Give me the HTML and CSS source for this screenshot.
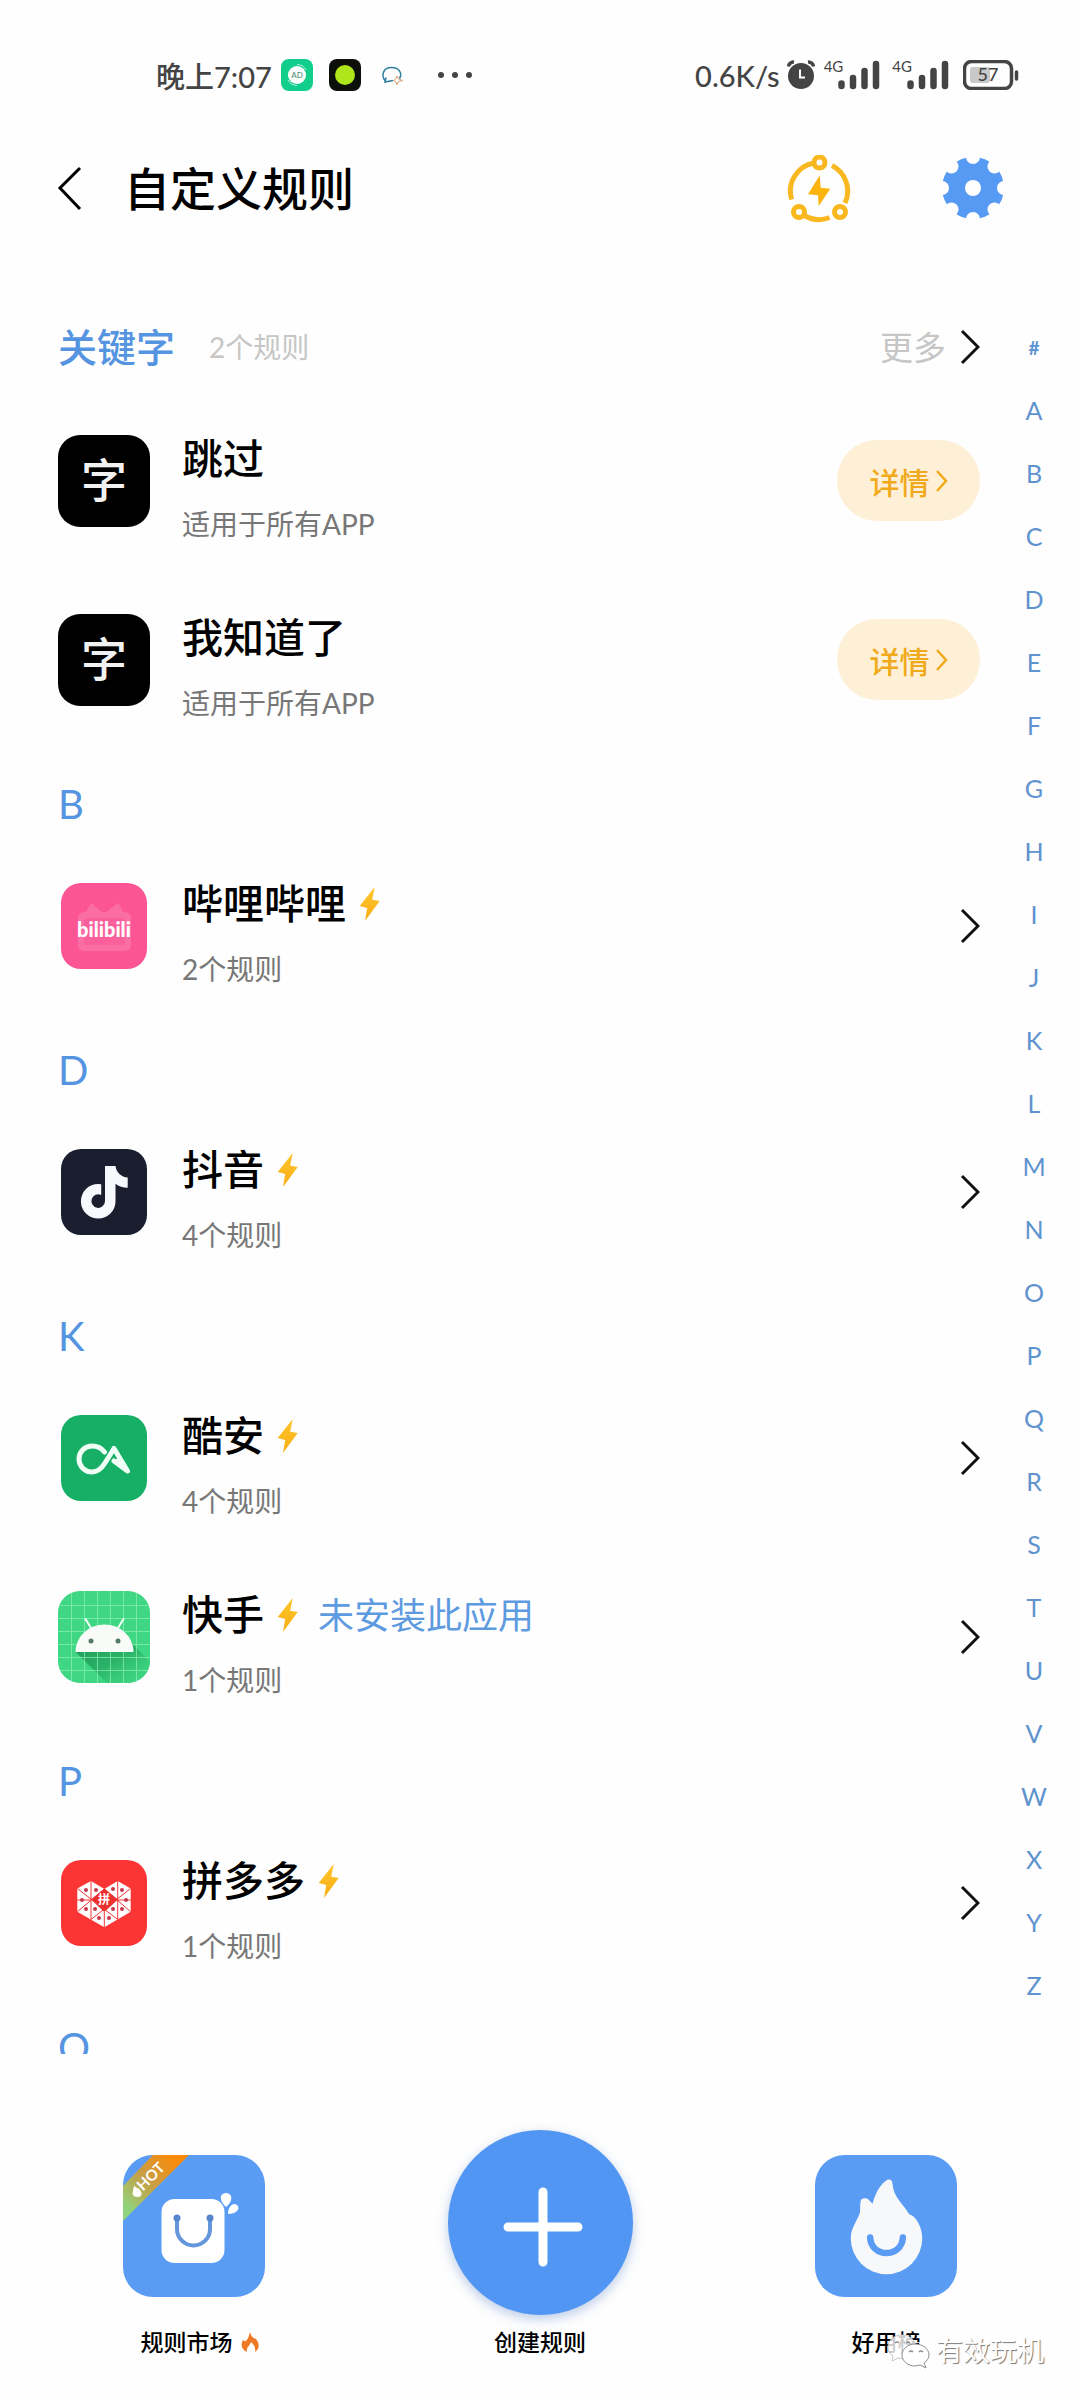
FILE: index.html
```html
<!DOCTYPE html>
<html lang="zh-CN">
<head>
    <meta charset="UTF-8">
    <meta name="viewport" content="width=device-width, initial-scale=1.0">
    <title>自定义规则</title>
    <link rel="stylesheet" href="styles.css">
</head>
<body>
    <!-- Shared icons -->
    <svg class="sprite" aria-hidden="true">
        <defs>
            <linearGradient id="bolt-fill" x1="0" y1="0" x2="0" y2="1">
                <stop offset="0" stop-color="#ffc62e"/>
                <stop offset="1" stop-color="#f8ad12"/>
            </linearGradient>
        </defs>
        <symbol id="bolt" viewBox="0 0 21 34">
            <path d="M15.7 0L.7 19l7.5 2L6 34l14.7-20-7.5-1.2z" fill="url(#bolt-fill)"/>
        </symbol>
        <symbol id="chevron" viewBox="0 0 20 36">
            <path d="M2 2l16 16L2 34" fill="none" stroke="currentColor" stroke-width="3"/>
        </symbol>
        <symbol id="signal" viewBox="0 0 42 30">
            <path d="M3.5 23.500v2.500M15 18v8M26.500 11v15M38 4v22" stroke="currentColor" stroke-width="6.500" stroke-linecap="round"/>
        </symbol>
    </svg>

    <div class="status-bar">
        <div class="status-left">
            <span class="status-time">晚上7:07</span>
            <svg class="status-app" viewBox="0 0 32 32">
                <rect width="32" height="32" rx="8" fill="#12ce8c"/>
                <circle cx="16" cy="16" r="9" fill="#fff"/>
                <path d="M16 5.500a10.500 10.500 0 0 1 9 5.500M16 26.500a10.500 10.500 0 0 1-9-5.500" fill="none" stroke="#baf3df" stroke-width="1"/>
                <text class="ad-text" x="16" y="19" text-anchor="middle">AD</text>
            </svg>
            <svg class="status-app" viewBox="0 0 32 32">
                <rect width="32" height="32" rx="8" fill="#0c0f0a"/>
                <circle cx="16" cy="16" r="10" fill="#aee51b"/>
            </svg>
            <svg class="status-app" viewBox="0 0 32 32">
                <path d="M8 21.500C4 16.500 6 8.500 14.500 8.500c8 0 11 6 8 11M9 18.500l-1 4.500 8-1.500" fill="none" stroke="#2d7f9b" stroke-width="1.500"/>
                <path d="M20 17l1.500 3 4 1.500-4 1-1.500 3-1.500-3-2-1 2-1.500z" fill="#fff" stroke="#d79a6a" stroke-width="1"/>
            </svg>
            <svg class="status-dots" viewBox="0 0 36 8">
                <circle cx="4" cy="4" r="3" fill="currentColor"/>
                <circle cx="18" cy="4" r="3" fill="currentColor"/>
                <circle cx="32" cy="4" r="3" fill="currentColor"/>
            </svg>
        </div>
        <div class="status-right">
            <span class="status-speed">0.6K/s</span>
            <svg class="status-alarm" viewBox="0 0 28 30">
                <path d="M1.500 6.500A5 5 0 0 1 7 2M26.500 6.500A5 5 0 0 0 21 2" fill="none" stroke="currentColor" stroke-width="3.500"/>
                <circle cx="14" cy="16" r="13" fill="currentColor"/>
                <path d="M13 9.500v8h5" fill="none" stroke="#fff" stroke-width="2"/>
            </svg>
            <span class="network">4G</span>
            <svg class="status-signal"><use href="#signal"/></svg>
            <span class="network network-second">4G</span>
            <svg class="status-signal"><use href="#signal"/></svg>
            <svg class="status-battery" viewBox="0 0 56 30">
                <rect x="1.500" y="1.500" width="47" height="27" rx="7" fill="none" stroke="currentColor" stroke-width="3.500"/>
                <rect x="7" y="7" width="20" height="16" rx="3" fill="#c9c9c9"/>
                <path d="M53.500 12v7" stroke="currentColor" stroke-width="3.500" stroke-linecap="round"/>
                <text class="battery-text" x="25" y="21" text-anchor="middle">57</text>
            </svg>
        </div>
    </div>

    <header class="page-header">
        <a class="back" href="#" aria-label="返回">
            <svg viewBox="0 0 26 46"><path d="M24 2L4 22l20 21" fill="none" stroke="currentColor" stroke-width="3"/></svg>
        </a>
        <h1>自定义规则</h1>
        <button class="header-btn" type="button" aria-label="自动规则">
            <svg viewBox="0 0 68 68" fill="none" stroke="#f9b81f" stroke-width="5">
                <path d="M6.700 44.500A28.500 28.500 0 0 1 29 8M47 10.600A28.500 28.500 0 0 1 60 48M44.500 62.500A28.500 28.500 0 0 1 19.500 60.500"/>
                <circle cx="34.500" cy="7.500" r="5.500"/>
                <circle cx="14" cy="57" r="5.500"/>
                <circle cx="55" cy="57" r="5.500"/>
                <path d="M34.700 20.300L23 39.300l10 1 .7 10.700 11.600-17.300-9.600-1z" fill="#fdb40d" stroke="none"/>
            </svg>
        </button>
        <button class="header-btn" type="button" aria-label="设置">
            <svg viewBox="0 0 68 68">
                <mask id="gear-mask">
                    <rect width="68" height="68" fill="#fff"/>
                    <circle cx="34" cy="33" r="8"/>
                    <circle cx="34" cy="2" r="7"/>
                    <circle cx="34" cy="64" r="7"/>
                    <circle cx="3" cy="33" r="7"/>
                    <circle cx="65" cy="33" r="7"/>
                    <circle cx="12.500" cy="11.500" r="7"/>
                    <circle cx="55.500" cy="11.500" r="7"/>
                    <circle cx="12.500" cy="54.500" r="7"/>
                    <circle cx="55.500" cy="54.500" r="7"/>
                </mask>
                <circle cx="34" cy="33" r="31" fill="#569af3" mask="url(#gear-mask)"/>
            </svg>
        </button>
    </header>

    <main>
        <div class="rules">
            <section>
                <div class="keyword-head">
                    <h2>关键字</h2>
                    <span class="keyword-count">2个规则</span>
                    <a class="more" href="#">更多 <svg class="chevron"><use href="#chevron"/></svg></a>
                </div>
                <div class="rule">
                    <span class="app-icon word-icon">字</span>
                    <div class="rule-text">
                        <h3>跳过</h3>
                        <p>适用于所有APP</p>
                    </div>
                    <button class="detail" type="button">详情<svg viewBox="0 0 12 22"><path d="M1 1l9 10-9 10" fill="none" stroke="currentColor" stroke-width="2.500"/></svg></button>
                </div>
                <div class="rule">
                    <span class="app-icon word-icon">字</span>
                    <div class="rule-text">
                        <h3>我知道了</h3>
                        <p>适用于所有APP</p>
                    </div>
                    <button class="detail" type="button">详情<svg viewBox="0 0 12 22"><path d="M1 1l9 10-9 10" fill="none" stroke="currentColor" stroke-width="2.500"/></svg></button>
                </div>
            </section>

            <section>
                <h2 class="letter" id="B">B</h2>
                <a class="rule" href="#">
                    <svg class="app-icon small" viewBox="0 0 86 86">
                        <rect width="86" height="86" rx="20" fill="#fb5596"/>
                        <g fill="#fff" opacity=".15">
                            <rect x="17" y="29" width="53" height="39" rx="6"/>
                            <path d="M42 30L30 20l-5 9zM44 30l13-10 5 9z"/>
                        </g>
                        <rect x="23" y="35" width="41" height="27" rx="3" fill="#fb5596" opacity=".6"/>
                        <text class="bili-text" x="43" y="54" text-anchor="middle">bilibili</text>
                    </svg>
                    <div class="rule-text">
                        <h3>哔哩哔哩<svg class="bolt"><use href="#bolt"/></svg></h3>
                        <p>2个规则</p>
                    </div>
                    <svg class="chevron"><use href="#chevron"/></svg>
                </a>
            </section>

            <section>
                <h2 class="letter" id="D">D</h2>
                <a class="rule" href="#">
                    <svg class="app-icon small" viewBox="0 0 86 86">
                        <rect width="86" height="86" rx="20" fill="#1b1e2f"/>
                        <path d="M44 17h10.500c.8 6.500 5.500 11 12.200 11.500v10.300c-4.700 0-9-1.500-12.200-4v17.500a17.300 17.300 0 1 1-17.300-17.300l3 .2V46a6.800 6.800 0 1 0 3.800 6.300z" fill="#f7f9ff"/>
                    </svg>
                    <div class="rule-text">
                        <h3>抖音<svg class="bolt"><use href="#bolt"/></svg></h3>
                        <p>4个规则</p>
                    </div>
                    <svg class="chevron"><use href="#chevron"/></svg>
                </a>
            </section>

            <section>
                <h2 class="letter" id="K">K</h2>
                <a class="rule" href="#">
                    <svg class="app-icon small" viewBox="0 0 86 86">
                        <rect width="86" height="86" rx="20" fill="#17ae66"/>
                        <path d="M43.500 37C40.500 33 36 31 31 31a13 13 0 0 0 0 26c6 0 9.500-3.500 13-9l9-14.500L66.500 56 53 46" fill="none" stroke="#effff6" stroke-width="5" stroke-linecap="round" stroke-linejoin="round"/>
                        <path d="M51.500 45.500L58 43l10 14z" fill="#effff6"/>
                    </svg>
                    <div class="rule-text">
                        <h3>酷安<svg class="bolt"><use href="#bolt"/></svg></h3>
                        <p>4个规则</p>
                    </div>
                    <svg class="chevron"><use href="#chevron"/></svg>
                </a>
                <a class="rule" href="#">
                    <svg class="app-icon" viewBox="0 0 92 92">
                        <linearGradient id="droid-shadow" x1="0" y1="0" x2="1" y2="1">
                            <stop offset="0" stop-color="#1f9a57"/>
                            <stop offset=".5" stop-color="#2bb268"/>
                            <stop offset="1" stop-color="#3ddb84" stop-opacity=".2"/>
                        </linearGradient>
                        <clipPath id="droid-clip"><rect width="92" height="92" rx="22"/></clipPath>
                        <g clip-path="url(#droid-clip)">
                            <rect width="92" height="92" fill="#3fd783"/>
                            <path d="M17.500 61L49 92h43V71L72 50z" fill="url(#droid-shadow)"/>
                            <path d="M13.500 0v92M26.500 0v92M39.500 0v92M52.500 0v92M65.500 0v92M78.500 0v92M0 14.500h92M0 27.500h92M0 40.500h92M0 53.500h92M0 66.500h92M0 79.500h92" stroke="#8ff0b8" stroke-width="1" opacity=".7"/>
                        </g>
                        <path d="M27.500 28l5.500 9M65.500 28L60 37" stroke="#f6fff9" stroke-width="2" stroke-linecap="round"/>
                        <path d="M17.500 61a29 27.500 0 0 1 58 0z" fill="#f8fbf8"/>
                        <circle cx="33" cy="50" r="2.500" fill="#547a66"/>
                        <circle cx="60" cy="50" r="2.500" fill="#547a66"/>
                    </svg>
                    <div class="rule-text">
                        <h3>快手<svg class="bolt"><use href="#bolt"/></svg><span class="missing">未安装此应用</span></h3>
                        <p>1个规则</p>
                    </div>
                    <svg class="chevron"><use href="#chevron"/></svg>
                </a>
            </section>

            <section>
                <h2 class="letter" id="P">P</h2>
                <a class="rule" href="#">
                    <svg class="app-icon small" viewBox="0 0 86 86">
                        <rect width="86" height="86" rx="20" fill="#fb3534"/>
                        <path d="M30 21l13.300 8L56.700 21l13 7.500v23.200L43.300 67.300l-27-15.600V28.500z" fill="#fff"/>
                        <path d="M43.300 28.500L57 39.500 43.300 52 30 39.500z" fill="#e8302f"/>
                        <path d="M30 21v38M56.700 21v38M16.300 28.500l40.400 31M69.700 28.500L30 59.500M16.300 51.700L43.300 29M69.700 51.700L43.300 29M43.300 52v15M16.300 40H30M56.700 40h13" stroke="#fb3534" stroke-width="1"/>
                        <g fill="#c8384a">
                            <circle cx="25" cy="30" r="2"/><circle cx="35" cy="30" r="2"/>
                            <circle cx="52" cy="29" r="2"/><circle cx="61" cy="30" r="2"/>
                            <circle cx="21" cy="40" r="2"/><circle cx="65" cy="40" r="2"/>
                            <circle cx="25" cy="49" r="2"/><circle cx="34" cy="49" r="2"/>
                            <circle cx="52" cy="49" r="2"/><circle cx="61" cy="49" r="2"/>
                            <circle cx="38" cy="58" r="2"/><circle cx="48" cy="58" r="2"/>
                        </g>
                        <text class="pin-text" x="43" y="44" text-anchor="middle">拼</text>
                    </svg>
                    <div class="rule-text">
                        <h3>拼多多<svg class="bolt"><use href="#bolt"/></svg></h3>
                        <p>1个规则</p>
                    </div>
                    <svg class="chevron"><use href="#chevron"/></svg>
                </a>
            </section>

            <section>
                <h2 class="letter" id="Q">Q</h2>
            </section>
        </div>

        <nav class="index" aria-label="字母索引">
            <a class="hash" href="#">#</a>
            <a href="#A">A</a>
            <a href="#B">B</a>
            <a href="#C">C</a>
            <a href="#D">D</a>
            <a href="#E">E</a>
            <a href="#F">F</a>
            <a href="#G">G</a>
            <a href="#H">H</a>
            <a href="#I">I</a>
            <a href="#J">J</a>
            <a href="#K">K</a>
            <a href="#L">L</a>
            <a href="#M">M</a>
            <a href="#N">N</a>
            <a href="#O">O</a>
            <a href="#P">P</a>
            <a href="#Q">Q</a>
            <a href="#R">R</a>
            <a href="#S">S</a>
            <a href="#T">T</a>
            <a href="#U">U</a>
            <a href="#V">V</a>
            <a href="#W">W</a>
            <a href="#X">X</a>
            <a href="#Y">Y</a>
            <a href="#Z">Z</a>
        </nav>
    </main>

    <footer class="actions">
        <button class="action" type="button">
            <svg class="action-tile" viewBox="0 0 142 142">
                <linearGradient id="ribbon" gradientUnits="userSpaceOnUse" x1="0" y1="50" x2="48" y2="0">
                    <stop offset="0" stop-color="#90d37d"/>
                    <stop offset=".5" stop-color="#c79f45"/>
                    <stop offset="1" stop-color="#fb8a08"/>
                </linearGradient>
                <clipPath id="tile-clip"><rect width="142" height="142" rx="30"/></clipPath>
                <rect width="142" height="142" rx="30" fill="#5a9cf4"/>
                <path d="M30 0h36L0 66V31z" fill="url(#ribbon)" clip-path="url(#tile-clip)"/>
                <g transform="rotate(-45 28 23)">
                    <text class="hot-text" x="29" y="27" text-anchor="middle">HOT</text>
                </g>
                <path d="M11 30c1 3 3 2 5 4 4 3 3 8-1 8-5 0-6-3-5-6 0-2 1-3 1-6z" fill="#fff"/>
                <rect x="38.500" y="44" width="63" height="64" rx="13" fill="#fff"/>
                <path d="M54 63v11a16.500 16.500 0 0 0 33 0V63" fill="none" stroke="#6496dc" stroke-width="4"/>
                <circle cx="54" cy="63" r="3.500" fill="#5585cc"/>
                <circle cx="87" cy="63" r="3.500" fill="#5585cc"/>
                <path d="M103 52c-4-4-6-8-5-11 2-4 8-4 10 0 1 4-1 8-5 11zM105 59c0-5 2-9 6-10 4 0 6 4 3 7-2 2-5 3-9 3z" fill="#fff"/>
            </svg>
            <span class="action-label hot-label">规则市场<svg class="flame" viewBox="0 0 24 24"><path d="M12 2c1 5 4 6 6 7 5 6 2 11-1 13 1-4-1-7-4-10-1 4-5 5-4 10-5-2-7-7-4-12 1 1 2 1 3 1 2-2 3-5 4-9z" fill="#ef7a25"/></svg></span>
        </button>
        <button class="action" type="button">
            <span class="action-add">
                <svg viewBox="0 0 80 80"><path d="M40 5v70M5 40h70" stroke="#fff" stroke-width="9" stroke-linecap="round"/></svg>
            </span>
            <span class="action-label">创建规则</span>
        </button>
        <button class="action" type="button">
            <svg class="action-tile" viewBox="0 0 143 143">
                <rect width="143" height="143" rx="30" fill="#5a9cf4"/>
                <path d="M45 59c1-5 0-8 1-13 1-3 6-3 8-1l4 4c3-11 8-20 15-24 3-1 5 1 5 4 1 14 11 20 17 31 6 1 13 12 13 24a36 36 0 0 1-72 0c0-10 6-17 9-25z" fill="#f7f8fa"/>
                <path d="M55.500 83c1 21 32 21 33 0" fill="none" stroke="#5a9cf4" stroke-width="6.500" stroke-linecap="round"/>
            </svg>
            <span class="action-label">好用榜</span>
        </button>
        <div class="watermark">
            <svg viewBox="0 0 44 36">
                <path d="M16 2C8 2 2 7 2 14c0 4 2 7 5 9l-1 5 6-3 6 1C24 26 30 20 30 14S24 2 16 2z" fill="#fff" fill-opacity=".8" stroke="#c4c4c4" stroke-width="1"/>
                <path d="M29 11c-7 0-13 5-13 11s6 11 13 11l5-1 6 3-2-5c3-2 5-5 5-8 0-6-6-11-14-11z" fill="#fff" stroke="#8d8d8d" stroke-width="1"/>
                <path d="M9 10q2-2 4 0M20 10q2-2 4 0M23 19q2-2 4 0M33 19q2-2 4 0" fill="none" stroke="#8d8d8d" stroke-width="1.500"/>
            </svg>
            <span>有效玩机</span>
        </div>
    </footer>
</body>
</html>
```
FILE: styles.css
```css
/* General Styles */
* {
    box-sizing: border-box;
}

body {
    display: flex;
    flex-direction: column;
    height: 100vh;
    margin: 0;
    background-color: #fefefe;
    color: #000;
    font-family: Lato, "Noto Sans CJK SC", sans-serif;
}

h1, h2, h3, p {
    margin: 0;
    font-weight: 400;
}

a {
    color: inherit;
    text-decoration: none;
}

button {
    padding: 0;
    border: none;
    background: none;
    color: inherit;
    font-family: inherit;
    cursor: pointer;
}

svg {
    display: block;
    flex-shrink: 0;
}

.sprite {
    position: absolute;
    width: 0;
    height: 0;
}

/* Status bar */
.status-bar {
    display: flex;
    flex-shrink: 0;
    justify-content: space-between;
    align-items: center;
    height: 150px;
    padding: 0 61px 0 156px;
    color: #444;
    font-size: 29px;
    font-weight: 500;
}

.status-left, .status-right {
    display: flex;
    align-items: center;
}

.status-left {
    gap: 16px;
}

.status-time {
    margin-right: -7px;
}

.status-app {
    width: 32px;
    height: 32px;
}

.status-dots {
    width: 36px;
    height: 8px;
    margin-left: 12px;
}

.status-alarm {
    width: 28px;
    height: 30px;
    margin: 0 9px 0 7px;
}

.network {
    align-self: flex-start;
    margin-right: -5px;
    font-size: 15px;
    font-weight: 400;
    line-height: 16px;
}

.network-second {
    margin-left: 12px;
}

.status-signal {
    width: 42px;
    height: 30px;
}

.status-battery {
    width: 56px;
    height: 30px;
    margin-left: 14px;
}

.ad-text {
    fill: #4e8f7a;
    font-size: 8px;
}

.battery-text {
    fill: #444;
    font-size: 18px;
}

/* Header */
.page-header {
    display: flex;
    flex-shrink: 0;
    align-items: center;
    height: 78px;
    padding: 0 73px 0 56px;
}

.back svg {
    width: 26px;
    height: 46px;
}

.page-header h1 {
    flex: 1;
    margin-left: 42px;
    font-size: 46px;
    font-weight: 500;
    line-height: 60px;
}

.header-btn {
    margin-left: 86px;
}

.header-btn svg {
    width: 68px;
    height: 68px;
}

/* Rules list */
main {
    display: flex;
    flex: 1;
    min-height: 0;
    margin-top: 75px;
    overflow: hidden;
}

.rules {
    flex: 1;
    padding: 0 8px 0 58px;
}

.keyword-head {
    display: flex;
    align-items: center;
    height: 88px;
}

.keyword-head h2 {
    color: #5594e0;
    font-size: 39px;
    font-weight: 500;
    line-height: 48px;
}

.keyword-count {
    flex: 1;
    margin-left: 34px;
    color: #c6c6c6;
    font-size: 28px;
    line-height: 48px;
}

.more {
    display: flex;
    align-items: center;
    gap: 14px;
    color: #c6c6c6;
    font-size: 33px;
    line-height: 48px;
}

.chevron {
    width: 20px;
    height: 36px;
    color: #111;
}

.letter {
    height: 87px;
    padding-top: 33px;
    color: #5594e0;
    font-size: 40px;
    line-height: 44px;
}

.rule {
    display: flex;
    align-items: center;
    height: 179px;
}

.app-icon {
    width: 92px;
    height: 92px;
    margin-right: 32px;
}

.app-icon.small {
    width: 86px;
    height: 86px;
    margin-left: 3px;
    margin-right: 35px;
}

.word-icon {
    border-radius: 22px;
    background-color: #000;
    color: #f2f2f2;
    font-size: 46px;
    font-weight: 500;
    line-height: 90px;
    text-align: center;
}

.rule-text {
    flex: 1;
    padding-top: 16px;
}

.rule-text h3 {
    display: flex;
    align-items: center;
    font-size: 41px;
    font-weight: 500;
    line-height: 50px;
}

.rule-text p {
    margin-top: 20px;
    color: #777;
    font-size: 28px;
    line-height: 40px;
}

.bolt {
    width: 21px;
    height: 34px;
    margin-left: 13px;
}

.missing {
    margin-left: 20px;
    color: #5e9ae0;
    font-size: 36px;
    font-weight: 400;
}

.detail {
    display: flex;
    justify-content: center;
    align-items: center;
    gap: 6px;
    width: 143px;
    height: 81px;
    border-radius: 40px;
    background-color: #fef0d6;
    color: #f0aa1c;
    font-size: 30px;
    font-weight: 500;
}

.detail svg {
    width: 12px;
    height: 22px;
}

/* Letter index */
.index {
    display: flex;
    flex-direction: column;
    width: 92px;
    padding-top: 13px;
    color: #5e93cf;
    font-size: 25px;
    line-height: 63px;
    text-align: center;
}

.index .hash {
    font-size: 19px;
    font-weight: 700;
}

/* Bottom actions */
.actions {
    position: relative;
    display: grid;
    grid-template-columns: repeat(3, 1fr);
    flex-shrink: 0;
    align-items: end;
    padding: 76px 21px 42px;
}

.action {
    display: flex;
    flex-direction: column;
    align-items: center;
}

.action-tile {
    width: 142px;
    height: 142px;
}

.action-add {
    display: flex;
    justify-content: center;
    align-items: center;
    width: 185px;
    height: 185px;
    margin-bottom: -18px;
    padding: 8px 0 0 6px;
    border-radius: 50%;
    background-color: #5196f3;
    box-shadow: 0 4px 12px rgba(60, 110, 190, 0.35);
}

.action-add svg {
    width: 80px;
    height: 80px;
}

.action-label {
    display: flex;
    align-items: center;
    gap: 5px;
    margin-top: 29px;
    font-size: 23px;
    font-weight: 500;
    line-height: 32px;
}

.hot-label {
    padding-left: 14px;
}

.flame {
    width: 24px;
    height: 24px;
}

.hot-text {
    fill: #fff;
    font-size: 15px;
    font-weight: 700;
}

.bili-text {
    fill: #fff;
    font-size: 20px;
    font-weight: 900;
}

.pin-text {
    fill: #fff;
    font-size: 12px;
    font-weight: 700;
}

.watermark {
    position: absolute;
    right: 36px;
    bottom: 31px;
    display: flex;
    align-items: center;
    gap: 6px;
    color: #fff;
    font-size: 27px;
    line-height: 36px;
    text-shadow: 1px 1px 1px #777;
}

.watermark svg {
    width: 44px;
    height: 36px;
}
```
